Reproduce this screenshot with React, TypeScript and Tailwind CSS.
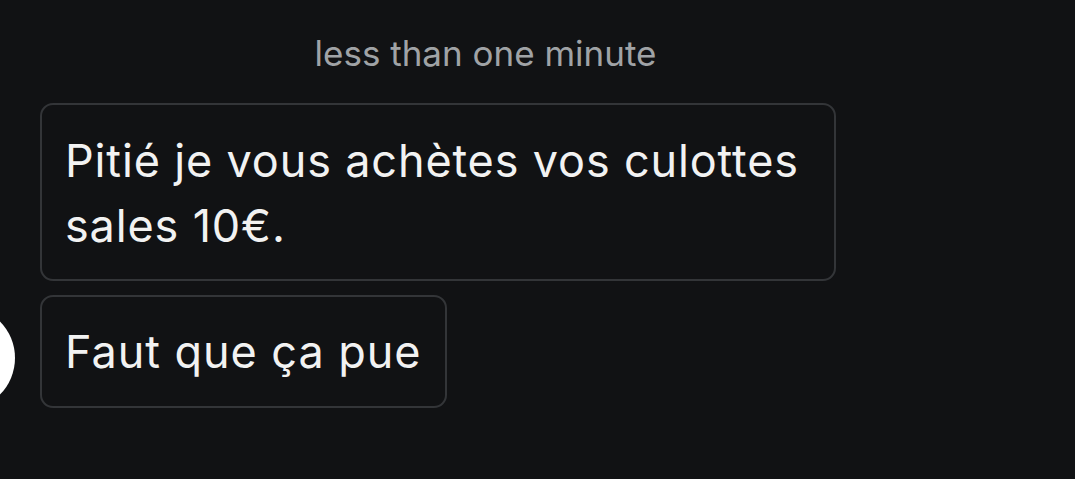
export default function App() {
  return (
    <div className="h-[479px] w-[1075px] overflow-hidden bg-[#111214] font-['Inter',sans-serif]">
      <div className="flex justify-center pt-[33px] pr-[104px]">
        <p className="text-[35px] leading-[40px] text-[#a0a3a6]">less than one minute</p>
      </div>
      <div className="mt-[30px] flex flex-col gap-[14px] pl-[40px]">
        <div className="w-fit max-w-[796px] rounded-[13px] border-2 border-[#333538] px-[23px] pt-[23px] pb-[21px] text-[45px] leading-[65px] tracking-[0.85px] text-[#f2f2f2]">
          Pitié je vous achètes vos culottes sales 10€.
        </div>
        <div className="relative w-fit">
          <div className="absolute top-[11px] left-[-129px] h-[104px] w-[104px] rounded-full bg-white" />
          <div className="w-fit rounded-[13px] border-2 border-[#333538] px-[23px] py-[22px] text-[45px] leading-[65px] tracking-[0.95px] text-[#f2f2f2]">
            Faut que ça pue
          </div>
        </div>
      </div>
    </div>
  );
}
